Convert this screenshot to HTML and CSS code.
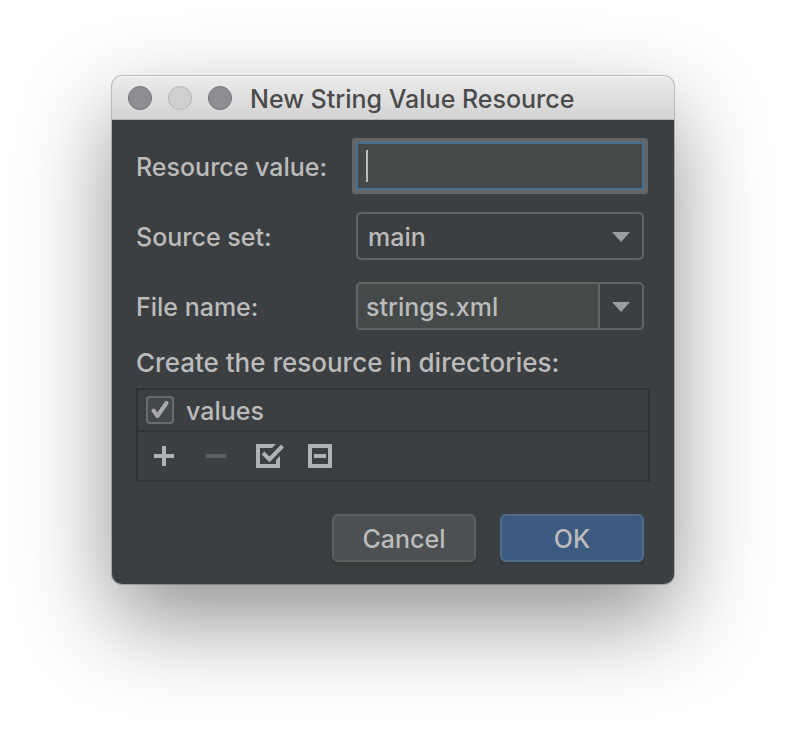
FILE: index.html
```html
<!DOCTYPE html>
<html lang="en">
<head>
<meta charset="utf-8">
<title>New String Value Resource</title>
<link rel="stylesheet" href="styles.css">
</head>
<body>
<main class="dialog">
  <header class="titlebar">
    <div class="lights">
      <button class="light" type="button" aria-label="Close"></button>
      <button class="light light-off" type="button" aria-label="Minimize" disabled></button>
      <button class="light" type="button" aria-label="Zoom"></button>
    </div>
    <h1 class="title">New String Value Resource</h1>
  </header>
  <form class="content">
    <div class="fields">
      <label class="name" for="value">Resource value:</label>
      <input class="control text-field" id="value" type="text">

      <label class="name" for="source">Source set:</label>
      <div class="picker">
        <select class="control source" id="source"><option>main</option></select>
        <svg class="arrow" width="18" height="12" viewBox="0 0 18 12" aria-hidden="true"><path d="M0 2h18L9 12z"/></svg>
      </div>

      <label class="name" for="file">File name:</label>
      <div class="control combo">
        <input class="combo-input" id="file" type="text" value="strings.xml">
        <button class="combo-button" type="button" aria-label="Show file names">
          <svg class="arrow-icon" width="18" height="12" viewBox="0 0 18 12" aria-hidden="true"><path d="M0 2h18L9 12z"/></svg>
        </button>
      </div>
    </div>

    <p class="caption">Create the resource in directories:</p>
    <div class="directories">
      <label class="directory">
        <input class="check" type="checkbox" checked>
        <svg class="tick" width="28" height="28" viewBox="0 0 28 28" aria-hidden="true"><path d="M7.500 14.500l4 5.500 9-13"/></svg>
        <span class="name">values</span>
      </label>
      <div class="toolbar">
        <button class="tool" type="button" aria-label="Add">
          <svg width="32" height="32" viewBox="0 0 32 32"><path d="M14 6h4v8h8v4h-8v8h-4v-8H6v-4h8z"/></svg>
        </button>
        <button class="tool tool-off" type="button" aria-label="Remove" disabled>
          <svg width="32" height="32" viewBox="0 0 32 32"><path d="M6 14h20v4H6z"/></svg>
        </button>
        <button class="tool" type="button" aria-label="Select all">
          <svg width="32" height="32" viewBox="0 0 32 32"><path d="M4 4h20l-4 4H8v16h16v-4l4-4v12H4z"/><path class="stroke" d="M11 13l6.500 6.500L30.500 6"/></svg>
        </button>
        <button class="tool" type="button" aria-label="Unselect all">
          <svg width="32" height="32" viewBox="0 0 32 32"><path fill-rule="evenodd" d="M4 4h24v24H4zM8 8v16h16V8z"/><path d="M10 14h12v4H10z"/></svg>
        </button>
      </div>
    </div>

    <div class="actions">
      <button class="button" type="button">Cancel</button>
      <button class="button button-primary" type="submit">OK</button>
    </div>
  </form>
</main>
</body>
</html>
```
FILE: styles.css
```css
* {
  box-sizing: border-box;
}

body {
  min-height: 100vh;
  margin: 0;
  padding: 76px 112px;
  background: #fff;
  color: #bbb;
  font: 500 25px/30px Inter, "Liberation Sans", sans-serif;
}

input,
select,
button {
  margin: 0;
  padding: 0;
  border: 0;
  background: none;
  color: inherit;
  font: inherit;
  outline: 0;
}

.dialog {
  border-radius: 10px;
  background: #3c3f41;
  box-shadow: 0 0 0 1px rgba(0, 0, 0, 0.2), 0 36px 92px rgba(0, 0, 0, 0.44);
}

.titlebar {
  display: flex;
  align-items: center;
  gap: 18px;
  height: 44px;
  padding: 0 16px;
  border-bottom: 1px solid #b4b4b4;
  border-radius: 10px 10px 0 0;
  background: linear-gradient(#ebebeb, #d3d3d3);
  box-shadow: inset 0 1px #f6f6f6;
}

.lights {
  display: flex;
  gap: 16px;
}

.light {
  width: 24px;
  height: 24px;
  border: 1px solid #717074;
  border-radius: 50%;
  background: #8e8d92;
}

.light-off {
  border-color: #b4b4b4;
  background: #d0d0d0;
}

.title {
  margin: 0;
  padding-top: 2px;
  color: #4b4b4b;
  font-size: 25px;
  font-weight: 500;
  white-space: nowrap;
}

.content {
  padding: 22px 24px;
}

.fields {
  display: grid;
  grid-template-columns: 220px 1fr;
  gap: 22px 0;
  align-items: center;
  margin-right: 6px;
  white-space: nowrap;
}

.name {
  padding-top: 2px;
}

.control {
  width: 100%;
  min-width: 0;
  height: 48px;
  border: 2px solid #646464;
  border-radius: 5px;
}

.text-field {
  padding: 0 8px;
  border-color: #466d94;
  border-radius: 1px;
  background: linear-gradient(#bbb, #bbb) 8px 6px / 2px 32px no-repeat #45494a;
  box-shadow: 0 0 0 4px #646668;
}

.picker {
  display: grid;
  align-items: center;
}

.picker > * {
  grid-area: 1 / 1;
}

.source {
  padding: 2px 10px 0;
  appearance: none;
}

.arrow {
  justify-self: end;
  margin-right: 14px;
  pointer-events: none;
}

.arrow,
.arrow-icon {
  fill: #9a9da1;
}

.combo {
  display: flex;
  overflow: hidden;
}

.combo-input {
  flex: 1;
  min-width: 0;
  padding: 2px 8px 0;
  background: #45494a;
}

.combo-button {
  display: grid;
  place-items: center;
  width: 44px;
  border-left: 2px solid #646464;
}

.caption {
  margin: 18px 0 10px;
  font-size: 26px;
  white-space: nowrap;
}

.directories {
  border: 2px solid #323232;
}

.directory {
  display: grid;
  grid-template-columns: 28px 1fr;
  gap: 12px;
  align-items: center;
  height: 40px;
  padding: 0 8px;
}

.check,
.tick {
  grid-area: 1 / 1;
}

.check {
  width: 28px;
  height: 28px;
  border: 2px solid #6b6b6b;
  border-radius: 4px;
  background: #43494a;
  appearance: none;
}

.tick {
  fill: none;
  stroke: #a9a9a9;
  stroke-width: 4;
  stroke-linecap: round;
  stroke-linejoin: round;
  pointer-events: none;
}

.check:not(:checked) + .tick {
  visibility: hidden;
}

.toolbar {
  display: flex;
  align-items: center;
  gap: 20px;
  height: 50px;
  padding: 0 10px;
  border-top: 2px solid #323232;
}

.tool {
  display: grid;
  fill: #afb1b3;
}

.tool-off {
  fill: #5b5d5f;
}

.stroke {
  fill: none;
  stroke: #afb1b3;
  stroke-width: 4;
}

.actions {
  display: flex;
  justify-content: flex-end;
  gap: 24px;
  margin: 32px 6px 0 0;
}

.button {
  width: 144px;
  height: 48px;
  padding-top: 2px;
  border: 2px solid #5e6060;
  border-radius: 6px;
  background: #4c5052;
  box-shadow: 0 4px #37393a;
}

.button-primary {
  border-color: #4c708c;
  background: #3d5a80;
}
```
